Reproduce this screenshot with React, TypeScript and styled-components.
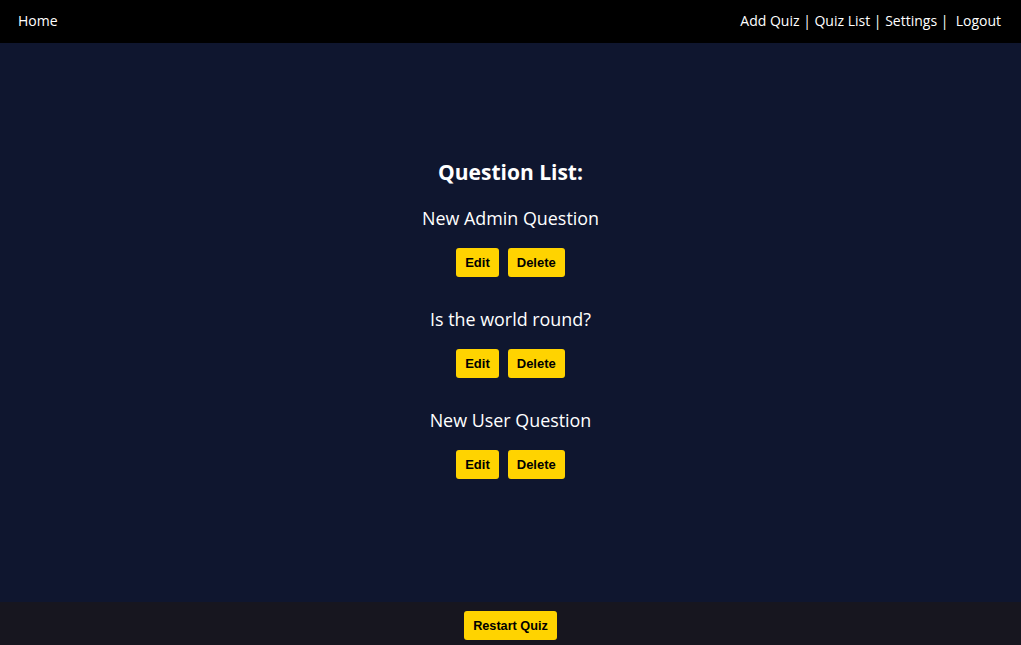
import React from "react";
import styled, { createGlobalStyle } from "styled-components";

const Global = createGlobalStyle`
  html, body { margin: 0; padding: 0; }
  body { background: #0f162f; font-family: "Open Sans", "Noto Sans", sans-serif; }
  #root { min-height: 100vh; }
`;

const Page = styled.div`
  display: flex;
  flex-direction: column;
  height: 645px;
`;

const NavBar = styled.nav`
  height: 43px;
  box-sizing: border-box;
  flex: none;
  background: #000;
  display: flex;
  align-items: center;
  justify-content: space-between;
  padding: 0 20px 2px 18px;
  color: #fff;
  font-family: "Open Sans", sans-serif;
  font-size: 14px;
`;

const NavLink = styled.span`
  color: #fff;
  white-space: pre;
`;

const Main = styled.main`
  flex: 1;
  display: flex;
  flex-direction: column;
  align-items: center;
  justify-content: center;
  padding-bottom: 9px;
  color: #fff;
`;

const Title = styled.h2`
  margin: 0 0 19px;
  font-size: 21px;
  line-height: 30px;
  font-weight: 700;
`;

const List = styled.div`
  display: flex;
  flex-direction: column;
  align-items: center;
  gap: 30px;
`;

const Item = styled.div`
  display: flex;
  flex-direction: column;
  align-items: center;
  gap: 18px;
`;

const QuestionText = styled.div`
  font-size: 17.9px;
  line-height: 24px;
`;

const ButtonRow = styled.div`
  display: flex;
  gap: 9px;
`;

const Button = styled.button`
  height: 29px;
  padding: 0 9px;
  border: none;
  border-radius: 3px;
  background: #ffd300;
  color: #000;
  font-family: "Liberation Sans", Arial, sans-serif;
  font-size: 13px;
  font-weight: 700;
  cursor: pointer;
`;

const FooterButton = styled(Button)`
  padding: 0 9px;
  font-size: 12.7px;
`;

const Footer = styled.footer`
  height: 43px;
  box-sizing: border-box;
  flex: none;
  background: #17161f;
  display: flex;
  align-items: flex-start;
  justify-content: center;
  padding-top: 9px;
`;

const questions = ["New Admin Question", "Is the world round?", "New User Question"];

export default function App() {
  return (
    <Page>
      <Global />
      <NavBar>
        <NavLink>Home</NavLink>
        <NavLink>Add Quiz | Quiz List | Settings |  Logout</NavLink>
      </NavBar>
      <Main>
        <Title>Question List:</Title>
        <List>
          {questions.map((q) => (
            <Item key={q}>
              <QuestionText>{q}</QuestionText>
              <ButtonRow>
                <Button>Edit</Button>
                <Button>Delete</Button>
              </ButtonRow>
            </Item>
          ))}
        </List>
      </Main>
      <Footer>
        <FooterButton>Restart Quiz</FooterButton>
      </Footer>
    </Page>
  );
}
